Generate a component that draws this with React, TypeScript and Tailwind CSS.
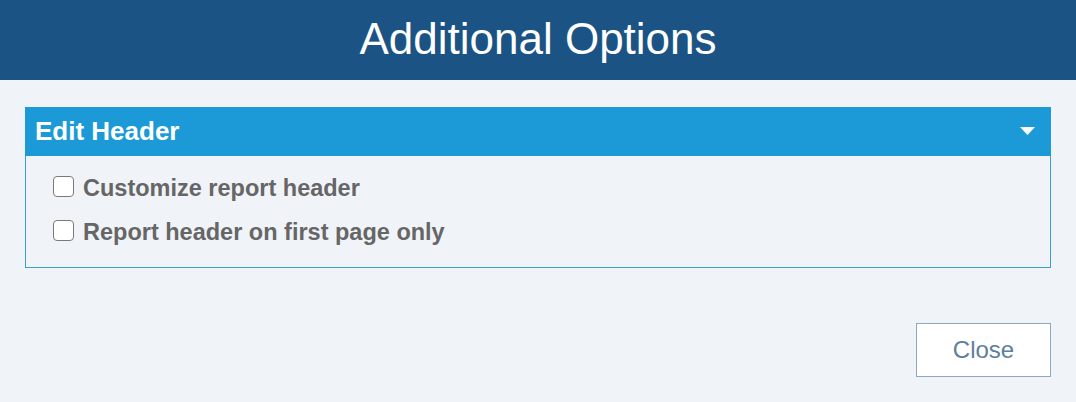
const options = ['Customize report header', 'Report header on first page only'];

export default function App() {
  return (
    <div className="w-[1076px] h-[402px] bg-[#f0f4f8] font-['Liberation_Sans',Arial,sans-serif] flex flex-col">
      <div className="h-[80px] bg-[#1b5384] flex items-center justify-center">
        <h1 className="text-[44px] text-white font-normal leading-none pb-[3px]">Additional Options</h1>
      </div>

      <div className="px-[25px] pt-[27px]">
        <div className="border border-[#3ba0c6]">
          <div className="h-[49px] bg-[#1b9ad7] flex items-center justify-between pl-[10px] pr-[16px] -mx-px -mt-px">
            <span className="text-white font-bold text-[26px]">Edit Header</span>
            <svg width="15" height="9" viewBox="0 0 15 9">
              <polygon points="0,0 15,0 7.5,8" fill="#fff" />
            </svg>
          </div>
          <div className="pt-[22px] pb-[23px] pl-[27px] flex flex-col gap-[22px]">
            {options.map((label) => (
              <label key={label} className="flex items-center gap-[9px] h-[22px]">
                <span className="w-[21px] h-[21px] rounded-[4px] border-[1.5px] border-[#7a7a7a] bg-white inline-block -mt-[6px]" />
                <span className="text-[23.5px] font-bold text-[#666666]">{label}</span>
              </label>
            ))}
          </div>
        </div>
      </div>

      <div className="flex justify-end px-[25px] mt-[55px]">
        <button className="w-[135px] h-[54px] bg-white border border-[#8fa8bc] text-[#5d7f9c] text-[24px]">
          Close
        </button>
      </div>
    </div>
  );
}
